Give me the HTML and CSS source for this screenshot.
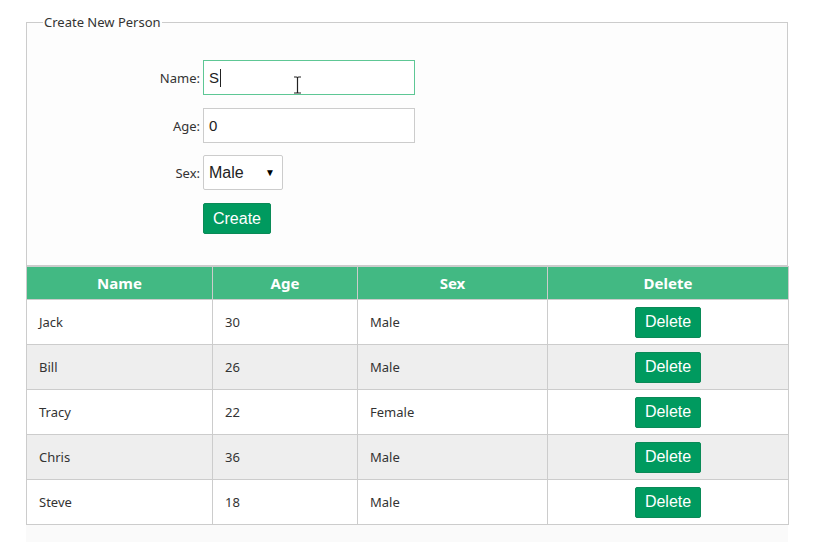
FILE: index.html
```html
<!DOCTYPE html>
<html>
<head>
<meta charset="utf-8">
<link rel="stylesheet" href="styles.css">
</head>
<body>
<div class="page">
  <fieldset class="panel">
    <legend class="legend">Create New Person</legend>
    <div class="form">
      <label class="lbl">Name:</label>
      <div class="field field-focus"><span class="val">S</span><span class="caret"></span><svg class="ibeam" width="9" height="18" viewBox="0 0 9 18"><path d="M1 1h2.5c.6 0 1 .4 1 1M8 1H5.5c-.6 0-1 .4-1 1v14c0 .6-.4 1-1 1H1M4.5 16c0 .6.4 1 1 1H8" fill="none" stroke="#222" stroke-width="1.2"/></svg></div>
      <label class="lbl">Age:</label>
      <div class="field"><span class="val">0</span></div>
      <label class="lbl lbl-sex">Sex:</label>
      <div class="select"><span class="val">Male</span><span class="arrow">&#9660;</span></div>
      <span></span>
      <div><button class="btn btn-create">Create</button></div>
    </div>
  </fieldset>
  <table class="grid">
    <colgroup><col class="c1"><col class="c2"><col class="c3"><col class="c4"></colgroup>
    <thead>
      <tr><th>Name</th><th>Age</th><th>Sex</th><th>Delete</th></tr>
    </thead>
    <tbody>
      <tr><td>Jack</td><td>30</td><td>Male</td><td class="act"><button class="btn">Delete</button></td></tr>
      <tr class="alt"><td>Bill</td><td>26</td><td>Male</td><td class="act"><button class="btn">Delete</button></td></tr>
      <tr><td>Tracy</td><td>22</td><td>Female</td><td class="act"><button class="btn">Delete</button></td></tr>
      <tr class="alt"><td>Chris</td><td>36</td><td>Male</td><td class="act"><button class="btn">Delete</button></td></tr>
      <tr><td>Steve</td><td>18</td><td>Male</td><td class="act"><button class="btn">Delete</button></td></tr>
    </tbody>
  </table>
  <div class="foot"></div>
</div>
</body>
</html>
```
FILE: styles.css
```css
html, body { margin: 0; padding: 0; background: #fff; }
body { font-family: "Noto Sans", "DejaVu Sans", sans-serif; color: #333; }
.page { padding: 14px 0 0 26px; width: 762px; }
.panel {
  margin: 0; padding: 0; border: 1px solid #ccc; border-bottom: 1px solid #ccc;
  height: 252px; box-sizing: border-box; min-width: 0; background: #fdfdfd;
}
.legend { font-size: 13px; color: #333; padding: 0 1px; margin-left: 16px; line-height: 17px; }
.form {
  display: grid; grid-template-columns: 173px 212px; column-gap: 3px;
  row-gap: 12px; align-items: center; padding-top: 29px;
}
.lbl { font-size: 13px; text-align: right; color: #333; }
.field {
  position: relative; height: 35px; box-sizing: border-box; border: 1px solid #ccc; background: #fff;
  display: flex; align-items: center; padding-left: 5px;
  font-family: "Liberation Sans", Arial, sans-serif; font-size: 15px; color: #222;
}
.field-focus { border-color: #5ec795; margin-bottom: 1px; }
.caret { width: 1px; height: 18px; background: #222; margin-left: 1px; }
.ibeam { position: absolute; left: 89px; top: 15px; }
.select {
  width: 80px; height: 35px; box-sizing: border-box; border: 1px solid #ccc; border-radius: 2px; background: #fff;
  display: flex; align-items: center; justify-content: space-between; padding: 0 7px 0 5px;
  font-family: "Liberation Sans", Arial, sans-serif; font-size: 16px; color: #222;
}
.arrow { font-size: 10px; color: #000; }
.btn {
  background: #009a5f; color: #fff; border: 1px solid #0a8a57; border-radius: 2px;
  font-family: "Liberation Sans", Arial, sans-serif; font-size: 16px;
  padding: 0 9px; height: 31px; cursor: pointer;
}
.btn-create { margin-top: 1px; width: 68px; padding: 0; }
.grid { border-collapse: collapse; width: 762px; border: 1px solid #ccc; table-layout: fixed; }
.c1 { width: 186px; } .c2 { width: 145px; } .c3 { width: 190px; } .c4 { width: 241px; }
.grid th {
  background: #42b983; color: #fff; font-size: 15px; font-weight: bold; height: 33px;
  padding: 0; border-left: 1px solid #ccc; border-right: 1px solid #ccc; box-sizing: border-box;
}
.grid td {
  height: 45px; box-sizing: border-box; border: 1px solid #ccc; font-size: 13px; background: #fff;
  padding: 0 12px; color: #333;
}
.grid tr.alt td { background: #eee; }
.grid td.act { text-align: center; padding: 0; }
.grid td.act .btn { width: 66px; padding: 0; }
.foot { height: 20px; background: #fafafa; }
```
